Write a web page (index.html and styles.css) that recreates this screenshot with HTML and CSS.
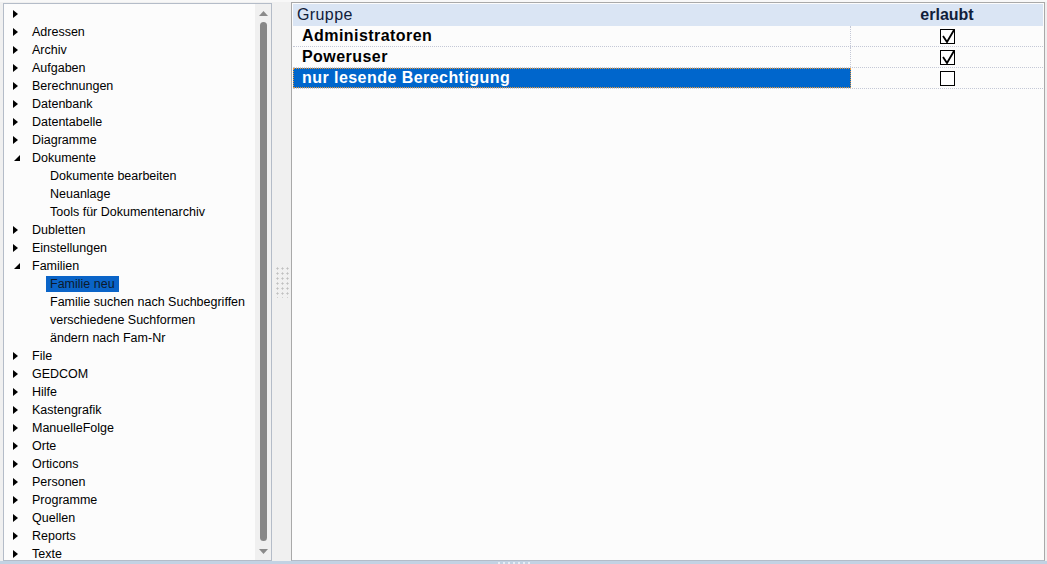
FILE: index.html
```html
<!DOCTYPE html>
<html lang="de">
<head>
<meta charset="utf-8">
<title>Rechte</title>
<link rel="stylesheet" href="styles.css">
</head>
<body>
<div class="app">
  <div class="topbar"></div>
  <div class="main">
    <!-- menu tree -->
    <div class="tree-panel">
      <div class="tree">
        <div class="node"><svg class="twisty" viewBox="0 0 8 8"><polygon points="0,0 5,4 0,8"/></svg><span class="label"></span></div>
        <div class="node"><svg class="twisty" viewBox="0 0 8 8"><polygon points="0,0 5,4 0,8"/></svg><span class="label">Adressen</span></div>
        <div class="node"><svg class="twisty" viewBox="0 0 8 8"><polygon points="0,0 5,4 0,8"/></svg><span class="label">Archiv</span></div>
        <div class="node"><svg class="twisty" viewBox="0 0 8 8"><polygon points="0,0 5,4 0,8"/></svg><span class="label">Aufgaben</span></div>
        <div class="node"><svg class="twisty" viewBox="0 0 8 8"><polygon points="0,0 5,4 0,8"/></svg><span class="label">Berechnungen</span></div>
        <div class="node"><svg class="twisty" viewBox="0 0 8 8"><polygon points="0,0 5,4 0,8"/></svg><span class="label">Datenbank</span></div>
        <div class="node"><svg class="twisty" viewBox="0 0 8 8"><polygon points="0,0 5,4 0,8"/></svg><span class="label">Datentabelle</span></div>
        <div class="node"><svg class="twisty" viewBox="0 0 8 8"><polygon points="0,0 5,4 0,8"/></svg><span class="label">Diagramme</span></div>
        <div class="node"><svg class="twisty" viewBox="0 0 8 8"><polygon points="7,1 7,7 1,7"/></svg><span class="label">Dokumente</span></div>
        <div class="node child"><span class="label">Dokumente bearbeiten</span></div>
        <div class="node child"><span class="label">Neuanlage</span></div>
        <div class="node child"><span class="label">Tools für Dokumentenarchiv</span></div>
        <div class="node"><svg class="twisty" viewBox="0 0 8 8"><polygon points="0,0 5,4 0,8"/></svg><span class="label">Dubletten</span></div>
        <div class="node"><svg class="twisty" viewBox="0 0 8 8"><polygon points="0,0 5,4 0,8"/></svg><span class="label">Einstellungen</span></div>
        <div class="node"><svg class="twisty" viewBox="0 0 8 8"><polygon points="7,1 7,7 1,7"/></svg><span class="label">Familien</span></div>
        <div class="node child"><span class="label selected">Familie neu</span></div>
        <div class="node child"><span class="label">Familie suchen nach Suchbegriffen</span></div>
        <div class="node child"><span class="label">verschiedene Suchformen</span></div>
        <div class="node child"><span class="label">ändern nach Fam-Nr</span></div>
        <div class="node"><svg class="twisty" viewBox="0 0 8 8"><polygon points="0,0 5,4 0,8"/></svg><span class="label">File</span></div>
        <div class="node"><svg class="twisty" viewBox="0 0 8 8"><polygon points="0,0 5,4 0,8"/></svg><span class="label">GEDCOM</span></div>
        <div class="node"><svg class="twisty" viewBox="0 0 8 8"><polygon points="0,0 5,4 0,8"/></svg><span class="label">Hilfe</span></div>
        <div class="node"><svg class="twisty" viewBox="0 0 8 8"><polygon points="0,0 5,4 0,8"/></svg><span class="label">Kastengrafik</span></div>
        <div class="node"><svg class="twisty" viewBox="0 0 8 8"><polygon points="0,0 5,4 0,8"/></svg><span class="label">ManuelleFolge</span></div>
        <div class="node"><svg class="twisty" viewBox="0 0 8 8"><polygon points="0,0 5,4 0,8"/></svg><span class="label">Orte</span></div>
        <div class="node"><svg class="twisty" viewBox="0 0 8 8"><polygon points="0,0 5,4 0,8"/></svg><span class="label">Orticons</span></div>
        <div class="node"><svg class="twisty" viewBox="0 0 8 8"><polygon points="0,0 5,4 0,8"/></svg><span class="label">Personen</span></div>
        <div class="node"><svg class="twisty" viewBox="0 0 8 8"><polygon points="0,0 5,4 0,8"/></svg><span class="label">Programme</span></div>
        <div class="node"><svg class="twisty" viewBox="0 0 8 8"><polygon points="0,0 5,4 0,8"/></svg><span class="label">Quellen</span></div>
        <div class="node"><svg class="twisty" viewBox="0 0 8 8"><polygon points="0,0 5,4 0,8"/></svg><span class="label">Reports</span></div>
        <div class="node"><svg class="twisty" viewBox="0 0 8 8"><polygon points="0,0 5,4 0,8"/></svg><span class="label">Texte</span></div>
      </div>
      <div class="scrollbar">
        <div class="arrow"><svg viewBox="0 0 9 5" class="arrow-icon"><polygon points="0,5 4.5,0 9,5"/></svg></div>
        <div class="thumb"></div>
        <div class="arrow"><svg viewBox="0 0 9 5" class="arrow-icon"><polygon points="0,0 9,0 4.5,5"/></svg></div>
      </div>
    </div>

    <!-- splitter -->
    <div class="splitter"><div class="grip"></div></div>

    <!-- group permission grid -->
    <div class="grid-panel">
      <div class="head">
        <div class="col-group">Gruppe</div>
        <div class="col-allowed">erlaubt</div>
      </div>
      <div class="row">
        <div class="cell-group">Administratoren</div>
        <div class="cell-allowed"><svg class="check" viewBox="0 0 15 15"><rect x="0.5" y="0.5" width="14" height="14"/><polyline points="3,7 7,13 14,1"/></svg></div>
      </div>
      <div class="row">
        <div class="cell-group">Poweruser</div>
        <div class="cell-allowed"><svg class="check" viewBox="0 0 15 15"><rect x="0.5" y="0.5" width="14" height="14"/><polyline points="3,7 7,13 14,1"/></svg></div>
      </div>
      <div class="row">
        <div class="cell-group active">nur lesende Berechtigung</div>
        <div class="cell-allowed"><svg class="check" viewBox="0 0 15 15"><rect x="0.5" y="0.5" width="14" height="14"/></svg></div>
      </div>
    </div>
  </div>
  <div class="bottombar"><div class="hgrip"></div></div>
</div>
</body>
</html>
```

FILE: styles.css
```css
* {
  box-sizing: border-box;
}

html, body {
  margin: 0;
  padding: 0;
}

body {
  font-family: "Liberation Sans", Arial, sans-serif;
  color: #000;
  background: #f0f0f0;
}

.app {
  width: 1047px;
  height: 564px;
  display: flex;
  flex-direction: column;
  background: #f0f0f0;
}

.topbar {
  height: 2px;
  background: #f8f8f8;
  flex: none;
}

.main {
  flex: 1;
  display: flex;
  padding: 0 2px 0 3px;
  min-height: 0;
}

/* ---- tree ---- */
.tree-panel {
  width: 269px;
  margin-top: 1px;
  border: 1px solid #b4bcc8;
  background: #fcfcfc;
  display: flex;
}

.tree {
  flex: 1;
  font-size: 12.5px;
  padding-top: 1px;
  overflow: hidden;
}

.node {
  height: 18px;
  display: flex;
  align-items: center;
  padding-left: 9px;
  white-space: nowrap;
}

.twisty {
  width: 8px;
  height: 8px;
  margin-right: 11px;
  fill: #000;
  flex: none;
}

.node.child {
  padding-left: 42px;
}

.label {
  padding: 0 4px 0 0;
  height: 16px;
  line-height: 16px;
}

.child .label {
  padding: 0 4px;
}

.label.selected {
  background: #0a64c8;
  color: #0c1a2c;
}

.scrollbar {
  width: 16px;
  background: #f0f0f0;
  display: flex;
  flex-direction: column;
  align-items: center;
}

.arrow {
  height: 18px;
  width: 100%;
  display: flex;
  align-items: center;
  justify-content: center;
  flex: none;
}

.arrow-icon {
  width: 9px;
  height: 5px;
  fill: #8a8a8a;
}

.thumb {
  flex: 1;
  width: 7px;
  background: #878787;
  border-radius: 4px;
  margin: 0 0 1px 0;
}

/* ---- splitter ---- */
.splitter {
  width: 19px;
  display: flex;
  align-items: center;
  justify-content: flex-end;
}

.grip {
  width: 17px;
  height: 32px;
  margin-right: -2px;
  background-image: radial-gradient(circle, #c0c0c0 0.9px, transparent 1.2px);
  background-size: 5px 5px;
  background-position: -1px 0;
}

/* ---- grid ---- */
.grid-panel {
  flex: 1;
  border: 1px solid #a9a9a9;
  border-bottom-color: #b4bcc8;
  background: #fcfcfc;
  padding: 1px 1px 0 1px;
}

.head {
  height: 22px;
  display: flex;
  align-items: center;
  background: #dae5f4;
  font-size: 16px;
  color: #10203a;
}

.col-group {
  width: 558px;
  padding-left: 4px;
  letter-spacing: 0.4px;
}

.col-allowed {
  flex: 1;
  text-align: center;
  font-weight: bold;
}

.row {
  height: 21px;
  display: flex;
  border-bottom: 1px dotted #c4c8d6;
}

.cell-group {
  width: 558px;
  padding-left: 9px;
  border-right: 1px dotted #c4c8d6;
  font-size: 16px;
  font-weight: bold;
  letter-spacing: 0.45px;
  line-height: 20px;
  white-space: nowrap;
}

.cell-group.active {
  background: #0066cc;
  color: #fff;
  outline: 1px dotted #e89a3c;
  outline-offset: -1px;
}

.cell-allowed {
  flex: 1;
  display: flex;
  align-items: center;
  justify-content: center;
  padding-left: 1px;
}

.check {
  width: 15px;
  height: 15px;
}

.check rect {
  fill: #fff;
  stroke: #000;
  stroke-width: 1;
}

.check polyline {
  fill: none;
  stroke: #000;
  stroke-width: 1.8;
}

/* ---- bottom bar ---- */
.bottombar {
  height: 3px;
  flex: none;
  background: #c2d2e3;
  display: flex;
  justify-content: center;
  align-items: flex-end;
}

.hgrip {
  width: 32px;
  height: 2px;
  margin-left: -20px;
  background-image: linear-gradient(to right, #e6eef6 2px, transparent 2px);
  background-size: 5px 2px;
}
```
